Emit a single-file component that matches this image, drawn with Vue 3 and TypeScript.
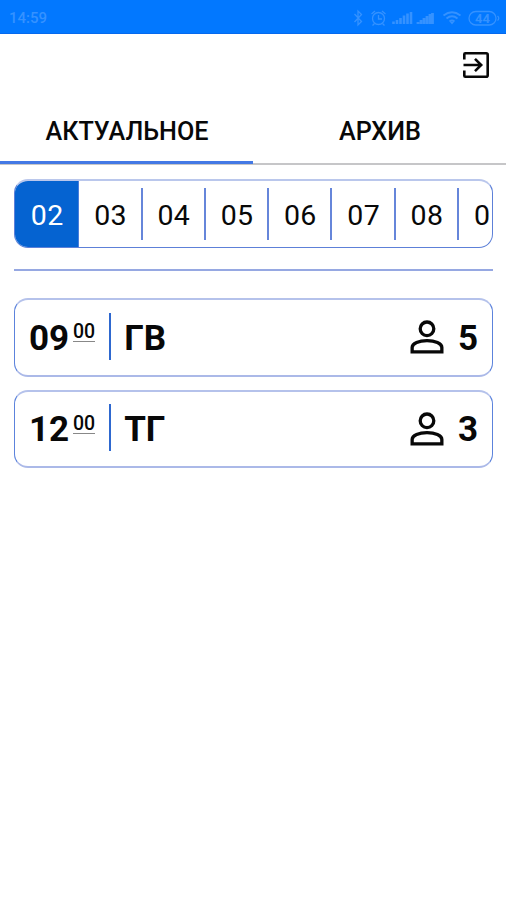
<script setup lang="ts">
import { ref } from 'vue'

interface Lesson {
  hour: string
  minute: string
  title: string
  people: number
}

const tabs: string[] = ['АКТУАЛЬНОЕ', 'АРХИВ']
const days: string[] = ['02', '03', '04', '05', '06', '07', '08', '09']
const lessons: Lesson[] = [
  { hour: '09', minute: '00', title: 'ГВ', people: 5 },
  { hour: '12', minute: '00', title: 'ТГ', people: 3 },
]
const activeTab = ref(0)
const activeDay = ref('02')
</script>

<template>
  <main class="screen">
    <div class="status">
      <span class="clock">14:59</span>
      <svg class="status-icons" width="148" height="20" viewBox="0 0 148 20" fill="none" stroke="currentColor" stroke-width="1.3">
        <path d="M2.500 6l7 7.500-3.500 3.500V3l3.500 3.500-7 7.500" />
        <circle cx="26.500" cy="10.500" r="6" />
        <path d="M26.500 7v4h3.500M19.500 6l3.500-3M33.500 6L30 3M22.500 15.500l-2 2M30.500 15.500l2 2" />
        <path d="M41.500 16v-2.500M45 16v-4M48.500 16v-6M52 16V7.500M55.500 16V5.500M59 16V4" stroke-width="2.600" />
        <path d="M66 16v-2M69 16v-4M72 16v-6M75 16V8M78 16V6M80.500 16V5" stroke-width="2.800" />
        <path d="M91.500 7.500q8.500-6.500 17 0M94.500 10.500q5.500-4.500 11 0M97.500 13.500q2.500-2 5 0" stroke-width="1.800" />
        <path d="M98 14h4L100 16.500z" fill="currentColor" stroke="none" />
        <rect x="117" y="3.500" width="27" height="13.500" rx="6.750" />
        <path d="M145.500 8q2.500 2 0 4.500" />
        <text x="130.500" y="15" text-anchor="middle" class="battery">44</text>
      </svg>
    </div>
    <header class="toolbar">
      <button class="exit" aria-label="Выход">
        <svg width="28" height="28" viewBox="0 0 28 28" fill="none" stroke="currentColor" stroke-width="2.600">
          <path d="M2.300 8.500V3.300Q2.300 2.300 3.300 2.300H24.200Q25.700 2.300 25.700 3.800V24.200Q25.700 25.700 24.200 25.700H3.300Q2.300 25.700 2.300 24.700V19.500" />
          <path d="M1.500 14H18.500M13 7.800L19.200 14L13 20.200" />
        </svg>
      </button>
    </header>
    <nav class="tabs">
      <button
        v-for="(tab, i) in tabs"
        :key="tab"
        class="tab"
        :class="{ active: activeTab === i }"
        @click="activeTab = i"
      >{{ tab }}</button>
    </nav>
    <section class="content">
      <div class="days">
        <div class="strip">
          <button
            v-for="day in days"
            :key="day"
            class="day"
            :class="{ selected: activeDay === day }"
            @click="activeDay = day"
          ><span>{{ day }}</span></button>
        </div>
      </div>
      <div class="rule"></div>
      <div class="lessons">
        <article v-for="lesson in lessons" :key="lesson.hour" class="lesson">
          <span class="hour">{{ lesson.hour }}</span>
          <span class="minute">{{ lesson.minute }}</span>
          <span class="divider"></span>
          <span class="title">{{ lesson.title }}</span>
          <svg class="person" width="34" height="34" viewBox="0 0 34 34" fill="none" stroke="currentColor" stroke-width="3.300">
            <circle cx="17" cy="8.800" r="6.800" />
            <path d="M2.150 31.850V27.500C2.150 23.500 9 20.650 17 20.650S31.850 23.500 31.850 27.500V31.850Z" />
          </svg>
          <span class="count">{{ lesson.people }}</span>
        </article>
      </div>
    </section>
  </main>
</template>

<style>
body {
  background: #fff;
}
</style>

<style scoped>
.screen {
  box-sizing: border-box;
  width: 100%;
  min-height: 900px;
  overflow: hidden;
  background: #fff;
  color: #080808;
  font-family: Roboto, "Liberation Sans", sans-serif;
}
button {
  margin: 0;
  padding: 0;
  border: 0;
  background: none;
  color: inherit;
  font: inherit;
}
.status {
  box-sizing: border-box;
  display: flex;
  align-items: center;
  justify-content: space-between;
  height: 34px;
  padding: 2px 6px 0 9px;
  border-bottom: 1px solid #0569ee;
  background: #0278ff;
  color: #3592ff;
}
.clock {
  font-size: 15px;
  font-weight: 500;
  line-height: 20px;
}
.status-icons {
  display: block;
}
.battery {
  fill: currentColor;
  stroke: none;
  font-size: 13px;
  font-weight: 700;
}
.toolbar {
  display: flex;
  justify-content: flex-end;
  height: 64px;
  padding: 17px 16px 0 0;
  box-sizing: border-box;
}
.exit {
  width: 28px;
  height: 28px;
}
.exit svg,
.person {
  display: block;
}
.tabs {
  display: grid;
  grid-template-columns: 1fr 1fr;
  height: 67px;
  box-sizing: border-box;
  border-bottom: 2px solid #c6c6c8;
}
.tab {
  box-sizing: border-box;
  height: 66px;
  padding: 5px 0 0 1px;
  border-bottom: 3px solid transparent;
  font-size: 25.200px;
  font-weight: 500;
  line-height: 58px;
}
.tab.active {
  border-bottom-color: #4479e5;
}
.content {
  padding: 14px 13px 0 14px;
}
.days {
  box-sizing: border-box;
  height: 69px;
  padding-right: 2px;
  overflow: hidden;
  border: 1.500px solid #5d80d8;
  border-top: 2px solid #bac7ec;
  border-radius: 14px;
}
.strip {
  display: flex;
  height: 100%;
  overflow: hidden;
}
.day {
  position: relative;
  flex: 0 0 63.300px;
  font-size: 28.500px;
  line-height: 66px;
  letter-spacing: 0.3px;
}
.day span {
  display: block;
  padding: 3px 0 0 1px;
  line-height: 63px;
}
.day::after {
  content: "";
  position: absolute;
  top: 7px;
  right: -1px;
  width: 2px;
  height: 52px;
  background: #6686da;
}
.day.selected {
  background: #0563d1;
  color: #fff;
}
.day.selected::after {
  top: 0;
  height: 66px;
  width: 1px;
  background: #4c7edb;
}
.rule {
  height: 2px;
  margin-top: 21px;
  background: #96a8e2;
}
.lessons {
  display: grid;
  gap: 13px;
  margin-top: 27px;
}
.lesson {
  box-sizing: border-box;
  display: flex;
  align-items: center;
  height: 78.500px;
  padding: 0 13px 0 14px;
  border: 1px solid #5c83dc;
  border-top: 2px solid #b5c2eb;
  border-bottom: 2px solid #abb9e8;
  border-radius: 14px;
  font-size: 35px;
  font-weight: 700;
  line-height: 40px;
}
.hour,
.title,
.count {
  padding-top: 3px;
}
.hour {
  width: 44px;
}
.minute {
  align-self: flex-start;
  margin-top: 22px;
  border-bottom: 1px solid #888;
  font-size: 19.500px;
  font-weight: 500;
  line-height: 19px;
}
.divider {
  width: 2px;
  height: 47px;
  margin: 0 13px 2px 14px;
  background: #2e68cf;
}
.title {
  flex: 1;
}
.count {
  width: 21px;
  margin-left: 14px;
}
</style>
